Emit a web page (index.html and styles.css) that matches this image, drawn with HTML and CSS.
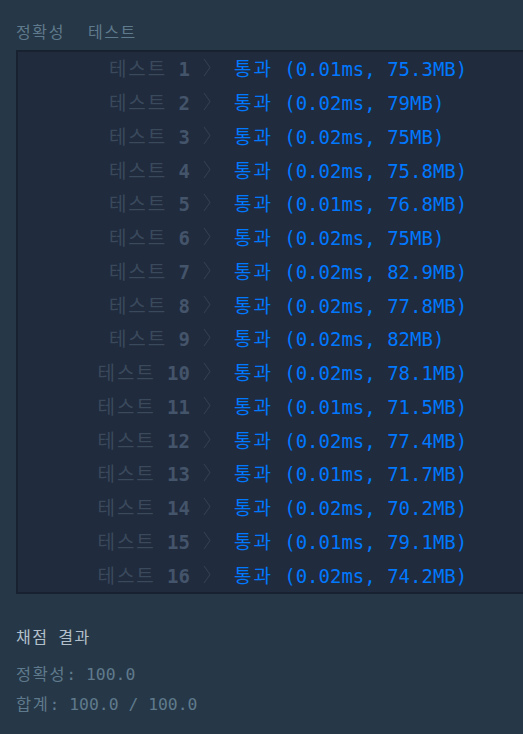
FILE: index.html
```html
<!DOCTYPE html>
<html lang="ko">
  <head>
    <meta charset="UTF-8" />
    <meta name="viewport" content="width=device-width, initial-scale=1.0" />
    <title>채점 결과</title>
    <link rel="stylesheet" href="styles.css">
  </head>
  <body>
    <div id="console">
      <div class="section-title"><span class="ko">정확성</span><span class="ko">테스트</span></div>
      <div id="result-box">
        <div class="row"><span class="case"><span class="ko">테스트</span> <b>1</b></span><span class="arrow"><svg viewBox="0 0 8 19"><polyline points="1,1 7,9.5 1,18" /></svg></span><span class="result"><span class="ko">통과</span> (0.01ms, 75.3MB)</span></div>
        <div class="row"><span class="case"><span class="ko">테스트</span> <b>2</b></span><span class="arrow"><svg viewBox="0 0 8 19"><polyline points="1,1 7,9.5 1,18" /></svg></span><span class="result"><span class="ko">통과</span> (0.02ms, 79MB)</span></div>
        <div class="row"><span class="case"><span class="ko">테스트</span> <b>3</b></span><span class="arrow"><svg viewBox="0 0 8 19"><polyline points="1,1 7,9.5 1,18" /></svg></span><span class="result"><span class="ko">통과</span> (0.02ms, 75MB)</span></div>
        <div class="row"><span class="case"><span class="ko">테스트</span> <b>4</b></span><span class="arrow"><svg viewBox="0 0 8 19"><polyline points="1,1 7,9.5 1,18" /></svg></span><span class="result"><span class="ko">통과</span> (0.02ms, 75.8MB)</span></div>
        <div class="row"><span class="case"><span class="ko">테스트</span> <b>5</b></span><span class="arrow"><svg viewBox="0 0 8 19"><polyline points="1,1 7,9.5 1,18" /></svg></span><span class="result"><span class="ko">통과</span> (0.01ms, 76.8MB)</span></div>
        <div class="row"><span class="case"><span class="ko">테스트</span> <b>6</b></span><span class="arrow"><svg viewBox="0 0 8 19"><polyline points="1,1 7,9.5 1,18" /></svg></span><span class="result"><span class="ko">통과</span> (0.02ms, 75MB)</span></div>
        <div class="row"><span class="case"><span class="ko">테스트</span> <b>7</b></span><span class="arrow"><svg viewBox="0 0 8 19"><polyline points="1,1 7,9.5 1,18" /></svg></span><span class="result"><span class="ko">통과</span> (0.02ms, 82.9MB)</span></div>
        <div class="row"><span class="case"><span class="ko">테스트</span> <b>8</b></span><span class="arrow"><svg viewBox="0 0 8 19"><polyline points="1,1 7,9.5 1,18" /></svg></span><span class="result"><span class="ko">통과</span> (0.02ms, 77.8MB)</span></div>
        <div class="row"><span class="case"><span class="ko">테스트</span> <b>9</b></span><span class="arrow"><svg viewBox="0 0 8 19"><polyline points="1,1 7,9.5 1,18" /></svg></span><span class="result"><span class="ko">통과</span> (0.02ms, 82MB)</span></div>
        <div class="row"><span class="case"><span class="ko">테스트</span> <b>10</b></span><span class="arrow"><svg viewBox="0 0 8 19"><polyline points="1,1 7,9.5 1,18" /></svg></span><span class="result"><span class="ko">통과</span> (0.02ms, 78.1MB)</span></div>
        <div class="row"><span class="case"><span class="ko">테스트</span> <b>11</b></span><span class="arrow"><svg viewBox="0 0 8 19"><polyline points="1,1 7,9.5 1,18" /></svg></span><span class="result"><span class="ko">통과</span> (0.01ms, 71.5MB)</span></div>
        <div class="row"><span class="case"><span class="ko">테스트</span> <b>12</b></span><span class="arrow"><svg viewBox="0 0 8 19"><polyline points="1,1 7,9.5 1,18" /></svg></span><span class="result"><span class="ko">통과</span> (0.02ms, 77.4MB)</span></div>
        <div class="row"><span class="case"><span class="ko">테스트</span> <b>13</b></span><span class="arrow"><svg viewBox="0 0 8 19"><polyline points="1,1 7,9.5 1,18" /></svg></span><span class="result"><span class="ko">통과</span> (0.01ms, 71.7MB)</span></div>
        <div class="row"><span class="case"><span class="ko">테스트</span> <b>14</b></span><span class="arrow"><svg viewBox="0 0 8 19"><polyline points="1,1 7,9.5 1,18" /></svg></span><span class="result"><span class="ko">통과</span> (0.02ms, 70.2MB)</span></div>
        <div class="row"><span class="case"><span class="ko">테스트</span> <b>15</b></span><span class="arrow"><svg viewBox="0 0 8 19"><polyline points="1,1 7,9.5 1,18" /></svg></span><span class="result"><span class="ko">통과</span> (0.01ms, 79.1MB)</span></div>
        <div class="row"><span class="case"><span class="ko">테스트</span> <b>16</b></span><span class="arrow"><svg viewBox="0 0 8 19"><polyline points="1,1 7,9.5 1,18" /></svg></span><span class="result"><span class="ko">통과</span> (0.02ms, 74.2MB)</span></div>
      </div>
      <div class="summary-title"><span class="ko">채점</span> <span class="ko">결과</span></div>
      <div class="summary-line"><span class="ko">정확성</span>: 100.0</div>
      <div class="summary-line"><span class="ko">합계</span>: 100.0 / 100.0</div>
    </div>
  </body>
</html>
```

FILE: styles.css
```css
body {
  margin: 0;
  padding: 0;
  background: #263747;
  overflow: hidden;
  font-family: "DejaVu Sans Mono", "Noto Sans CJK KR", monospace;
}

#console {
  padding: 23px 0 0 16px;
}

.ko {
  letter-spacing: 0.1em;
}

.section-title {
  display: flex;
  gap: 23px;
  font-size: 16px;
  line-height: 20px;
  color: #5f7a8c;
  margin-bottom: 7px;
}

#result-box {
  width: 560px;
  background: #202b3d;
  border: 2px solid #172130;
}

.row {
  display: grid;
  grid-template-columns: 172px 44px 1fr;
  align-items: center;
  box-sizing: border-box;
  height: 33.75px;
  padding-bottom: 2px;
  font-size: 19px;
  white-space: nowrap;
}

.case {
  text-align: right;
  color: #3a495c;
}

.case b {
  color: #44546a;
}

.arrow {
  padding-left: 13px;
  display: flex;
  align-items: center;
}

.arrow svg {
  width: 8px;
  height: 19px;
  fill: none;
  stroke: #323f51;
  stroke-width: 1.1;
}

.result {
  color: #0078ff;
}

.summary-title {
  margin-top: 34px;
  font-size: 16px;
  line-height: 20px;
  color: #b2c0cc;
}

.summary-line {
  margin-top: 20px;
  font-size: 16.4px;
  line-height: 14px;
  color: #5f7a8c;
}

.summary-line + .summary-line {
  margin-top: 16px;
}
```
